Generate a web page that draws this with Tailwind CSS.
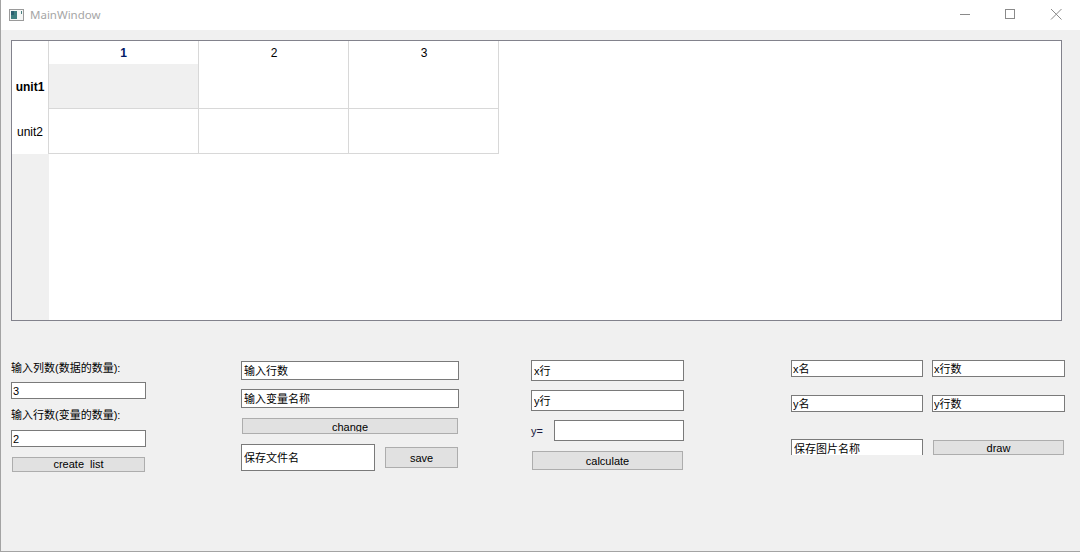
<!DOCTYPE html>
<html lang="en">
<head>
    <meta charset="utf-8">
    <title>MainWindow</title>
    <script src="https://cdn.jsdelivr.net/npm/@tailwindcss/browser@4"></script>
</head>

<body class="bg-[#f0f0f0]">
    <div class="flex flex-col w-[1080px] h-[552px] overflow-hidden border-l border-b border-[#a3a3a3] text-black text-[11px] font-['Liberation_Sans','Noto_Sans_CJK_SC',sans-serif]">

        <!-- Title bar -->
        <div class="flex items-center shrink-0 h-[30px] bg-white">
            <svg class="ml-[8px]" width="16" height="14" viewBox="0 0 16 14">
                <rect x="0.5" y="1.5" width="14" height="11" fill="#f4f6f6" stroke="#9a9a9a"/>
                <rect x="2" y="3" width="6" height="8" fill="#3e7f80"/>
                <rect x="2" y="3" width="3" height="4" fill="#2a5f70"/>
                <rect x="12" y="3" width="1" height="3" fill="#4a7f80"/>
            </svg>
            <span class="ml-[5px] text-[11.5px] text-[#a6a6a6] font-['Noto_Sans',sans-serif]">MainWindow</span>
            <div class="flex items-center ml-auto mr-[1px]">
                <svg width="46" height="30" viewBox="0 0 46 30"><path d="M19 14.5H29" stroke="#8a8a8a"/></svg>
                <svg width="46" height="30" viewBox="0 0 46 30"><rect x="18.5" y="9.5" width="9" height="9" fill="none" stroke="#8a8a8a"/></svg>
                <svg width="46" height="30" viewBox="0 0 46 30"><path d="M18 9L28.5 19.5M28.5 9L18 19.5" stroke="#8a8a8a"/></svg>
            </div>
        </div>

        <!-- Table -->
        <div class="flex shrink-0 ml-[10px] mt-[10px] w-[1051px] h-[281px] border border-[#82828c] bg-white text-[12px]">
            <div class="flex flex-col w-[37px] shrink-0 bg-[#f0f0f0]">
                <div class="h-[23px] bg-white border-r border-[#d8d8d8]"></div>
                <div class="flex items-center justify-center h-[45px] bg-white border-r border-[#d8d8d8] font-bold">unit1</div>
                <div class="flex items-center justify-center h-[45px] bg-white border-r border-[#d8d8d8]">unit2</div>
            </div>
            <div class="flex flex-col">
                <div class="flex h-[23px]">
                    <div class="flex items-center justify-center w-[149px] text-[#001a66] font-bold">1</div>
                    <div class="flex items-center justify-center w-[150px] pl-[1px] border-l border-[#d8d8d8]">2</div>
                    <div class="flex items-center justify-center w-[151px] pl-[1px] border-x border-[#d8d8d8]">3</div>
                </div>
                <div class="flex h-[45px]">
                    <div class="w-[149px] border-b border-[#d8d8d8] bg-[#f0f0f0]"></div>
                    <div class="w-[150px] border-l border-b border-[#d8d8d8]"></div>
                    <div class="w-[151px] border-x border-b border-[#d8d8d8]"></div>
                </div>
                <div class="flex h-[45px]">
                    <div class="w-[149px] border-b border-[#d8d8d8]"></div>
                    <div class="w-[150px] border-l border-b border-[#d8d8d8]"></div>
                    <div class="w-[151px] border-x border-b border-[#d8d8d8]"></div>
                </div>
            </div>
        </div>

        <!-- Controls -->
        <div class="flex items-start ml-[10px] mt-[39px]">

            <div class="flex flex-col w-[135px] shrink-0">
                <div class="h-[14px] mt-[1px] leading-[14px] whitespace-nowrap">输入列数(数据的数量):</div>
                <input value="3" class="w-[135px] h-[17px] mt-[7px] px-[1px] bg-white border border-[#7a7a7a] outline-none">
                <div class="h-[14px] mt-[9px] leading-[14px] whitespace-nowrap">输入行数(变量的数量):</div>
                <input value="2" class="w-[135px] h-[17px] mt-[8px] px-[1px] bg-white border border-[#7a7a7a] outline-none">
                <button class="ml-[1px] w-[133px] h-[15px] mt-[10px] leading-[13px] bg-[#e1e1e1] border border-[#adadad]">create&nbsp; list</button>
            </div>

            <div class="flex flex-col w-[218px] ml-[95px] mt-[1px] shrink-0">
                <input value="输入行数" class="w-[218px] h-[19px] px-[2px] pb-[2px] bg-white border border-[#7a7a7a] outline-none">
                <input value="输入变量名称" class="w-[218px] h-[19px] mt-[9px] px-[2px] pb-[2px] bg-white border border-[#7a7a7a] outline-none">
                <button class="flex justify-center ml-[1px] w-[216px] h-[16px] mt-[10px] pt-[2px] bg-[#e1e1e1] border border-[#adadad]">
                    <span class="block h-[11px] leading-[13px] overflow-hidden">change</span>
                </button>
                <div class="flex items-center mt-[10px]">
                    <input value="保存文件名" class="w-[134px] h-[27px] px-[2px] pb-[2px] bg-white border border-[#7a7a7a] outline-none">
                    <button class="w-[73px] h-[21px] ml-[10px] pt-[2px] bg-[#e1e1e1] border border-[#adadad]">save</button>
                </div>
            </div>

            <div class="flex flex-col w-[153px] ml-[72px] shrink-0">
                <input value="x行" class="w-[153px] h-[21px] px-[2px] pb-[2px] bg-white border border-[#7a7a7a] outline-none">
                <input value="y行" class="w-[153px] h-[21px] mt-[9px] px-[2px] pb-[2px] bg-white border border-[#7a7a7a] outline-none">
                <div class="flex items-center justify-between mt-[9px]">
                    <span class="pt-[2px] text-[#1a1a40]">y=</span>
                    <input class="w-[130px] h-[21px] bg-white border border-[#7a7a7a] outline-none">
                </div>
                <button class="ml-[1px] w-[151px] h-[19px] mt-[10px] pt-[1px] bg-[#e1e1e1] border border-[#adadad]">calculate</button>
            </div>

            <div class="flex flex-col w-[274px] ml-[107px] shrink-0">
                <div class="flex gap-[9px]">
                    <input value="x名" class="w-[132px] h-[17px] px-[1px] pb-[2px] bg-white border border-[#7a7a7a] outline-none">
                    <input value="x行数" class="w-[133px] h-[17px] px-[1px] pb-[2px] bg-white border border-[#7a7a7a] outline-none">
                </div>
                <div class="flex gap-[9px] mt-[18px]">
                    <input value="y名" class="w-[132px] h-[17px] px-[1px] pb-[2px] bg-white border border-[#7a7a7a] outline-none">
                    <input value="y行数" class="w-[133px] h-[17px] px-[1px] pb-[2px] bg-white border border-[#7a7a7a] outline-none">
                </div>
                <div class="flex mt-[27px]">
                    <div class="w-[132px] h-[16px] overflow-hidden">
                        <input value="保存图片名称" class="w-[132px] h-[20px] px-[2px] pb-[2px] bg-white border border-[#7a7a7a] outline-none">
                    </div>
                    <button class="w-[131px] h-[15px] ml-[10px] mt-[1px] pt-[1px] leading-[13px] bg-[#e1e1e1] border border-[#adadad]">draw</button>
                </div>
            </div>
        </div>
    </div>
</body>
</html>
